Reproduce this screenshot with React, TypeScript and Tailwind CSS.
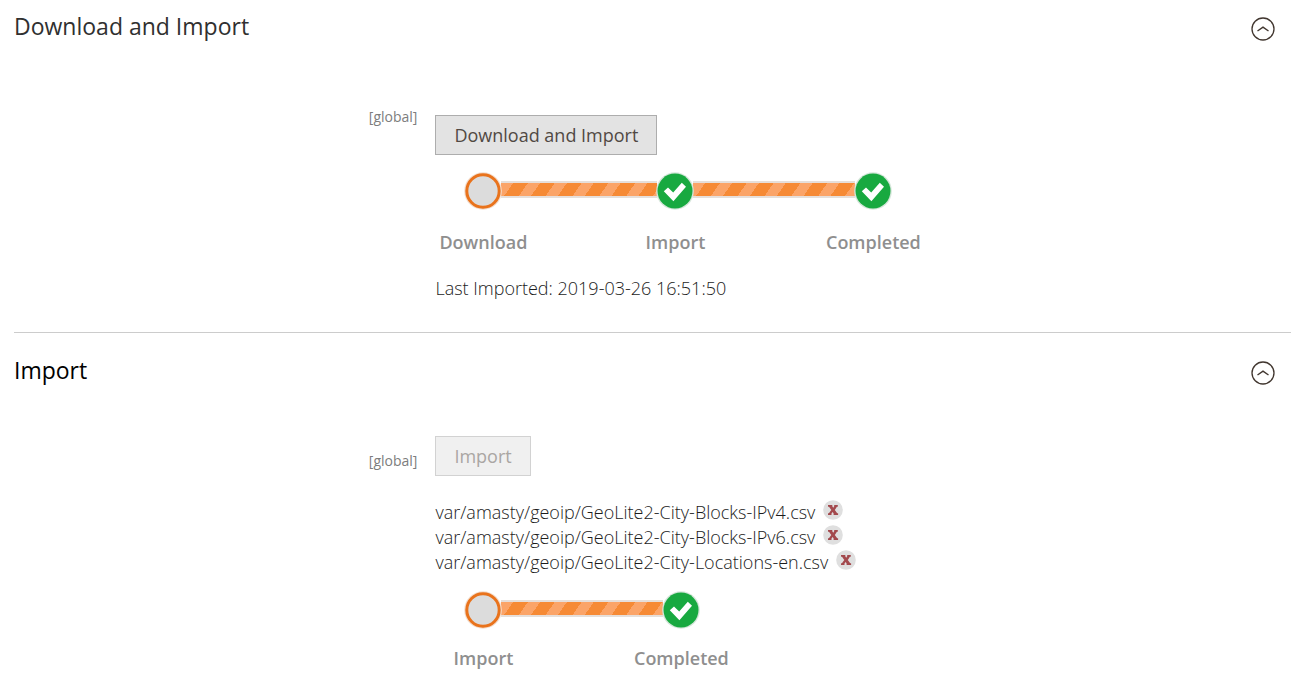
import { Fragment, useState } from "react";

interface StageProps {
  label: string;
  done?: boolean;
}

interface Track {
  stages: StageProps[];
  compact?: boolean;
}

const files = [
  "var/amasty/geoip/GeoLite2-City-Blocks-IPv4.csv",
  "var/amasty/geoip/GeoLite2-City-Blocks-IPv6.csv",
  "var/amasty/geoip/GeoLite2-City-Locations-en.csv",
];

function StageIcon({ done }: { done?: boolean }) {
  return (
    <svg viewBox="0 0 38 38" className="relative h-[38px] w-[38px]" aria-hidden="true">
      {done ? (
        <>
          <circle cx="19" cy="19" r="18.8" fill="#d5e6da" />
          <circle cx="19" cy="19" r="17.5" fill="#18a940" />
          <path d="M7.8 19.2l4.2-3.8 5.2 5 8.6-9.6 4.2 3.9-12.6 14.6z" fill="#fff" />
        </>
      ) : (
        <>
          <circle cx="19" cy="19" r="18.8" fill="#f3ddcd" />
          <circle cx="19" cy="19" r="16.2" fill="#dcdcdc" stroke="#e9731c" strokeWidth="3" />
        </>
      )}
    </svg>
  );
}

function StageBar({ className }: { className: string }) {
  return (
    <div
      className={`-mx-[30px] mt-[9px] h-[17px] border-y-2 border-[#e6dfda] bg-[repeating-linear-gradient(125deg,#fba468_0px,#fba468_10px,#f68a35_10px,#f68a35_22px)] ${className}`}
    />
  );
}

function Stages({ stages, compact }: Track) {
  return (
    <div className="flex items-start">
      {stages.map((stage, i) => (
        <Fragment key={stage.label}>
          {i > 0 && <StageBar className={compact || i > 1 ? "w-[162px]" : "w-[156px]"} />}
          <div className={`flex w-24 flex-col items-center ${compact ? "gap-[17px]" : "gap-5"}`}>
            <StageIcon done={stage.done} />
            <span className="text-[18px] leading-6 font-semibold text-[#8f8f8f]">{stage.label}</span>
          </div>
        </Fragment>
      ))}
    </div>
  );
}

interface SectionProps {
  title: string;
  active?: boolean;
  children: React.ReactNode;
}

function Section({ title, active, children }: SectionProps) {
  const [open, setOpen] = useState(true);

  return (
    <section>
      <div className="flex items-start justify-between pr-4">
        <h2 className={`text-[23px] leading-[30px] font-medium ${active ? "text-black" : "text-[#303030]"}`}>
          {title}
        </h2>
        <button
          type="button"
          aria-label={`Toggle ${title}`}
          aria-expanded={open}
          onClick={() => setOpen(!open)}
          className="mt-1.5"
        >
          <svg viewBox="0 0 24 24" className={`h-6 w-6 ${open ? "" : "rotate-180"}`} fill="none" stroke="#41362f">
            <circle cx="12" cy="12" r="11" strokeWidth="1.3" />
            <path d="M6.5 14l5.5-3.8 5.5 3.8" strokeWidth="1.4" />
          </svg>
        </button>
      </div>
      {open && children}
    </section>
  );
}

export default function App() {
  const [list, setList] = useState(files);

  return (
    <main className="bg-white pt-[11px] pr-2 pl-[14px] font-['Open_Sans','Noto_Sans',sans-serif] text-[#303030]">
      <Section title="Download and Import">
        <div className="flex border-b border-[#cccccc] pt-[74px] pb-8">
          <div className="-mt-2 w-[33%] shrink-0 pr-[18px] text-right text-[14px] leading-5 text-[#7d7d7d]">[global]</div>
          <div>
            <button
              type="button"
              className="h-10 border border-[#adadad] bg-[#e3e3e3] px-[18px] text-[18px] leading-6 font-medium text-[#514943]"
            >
              Download and Import
            </button>
            <div className="mt-[17px]">
              <Stages stages={[{ label: "Download" }, { label: "Import", done: true }, { label: "Completed", done: true }]} />
            </div>
            <p className="mt-[22px] text-[18px] leading-6 font-light text-[#1c1c1c]">Last Imported: 2019-03-26 16:51:50</p>
          </div>
        </div>
      </Section>

      <div className="pt-[22px]">
        <Section title="Import" active>
          <div className="flex pt-[51px]">
            <div className="w-[33%] shrink-0 pt-[15px] pr-[18px] text-right text-[14px] leading-5 text-[#7d7d7d]">[global]</div>
            <div>
              <button
                type="button"
                disabled
                className="h-10 border border-[#d2d2d2] bg-[#f0f0f0] px-[18px] text-[18px] leading-6 font-medium text-[#aaa6a3]"
              >
                Import
              </button>
              <ul className="mt-6 text-[18px] leading-[25px] font-light text-[#1c1c1c]">
                {list.map((file) => (
                  <li key={file} className="flex gap-2">
                    {file}
                    <button
                      type="button"
                      aria-label={`Delete ${file}`}
                      onClick={() => setList(list.filter((f) => f !== file))}
                      className="h-5 w-5"
                    >
                      <svg viewBox="0 0 20 20" className="h-5 w-5">
                        <circle cx="10" cy="10" r="9.8" fill="#dfdfdf" />
                        <path
                          d="M5 5h4.3v1.3l.9 1.5 1-1.5V5h3.6v1.7h-.9l-2.1 3.2 2.4 3.4h.9V15h-4.5v-1.5l-.9-1.5-1.2 1.5V15H5v-1.7h.9l2.4-3.3L6 6.7H5z"
                          fill="#a3494d"
                        />
                      </svg>
                    </button>
                  </li>
                ))}
              </ul>
              <div className="mt-4">
                <Stages compact stages={[{ label: "Import" }, { label: "Completed", done: true }]} />
              </div>
            </div>
          </div>
        </Section>
      </div>
    </main>
  );
}
